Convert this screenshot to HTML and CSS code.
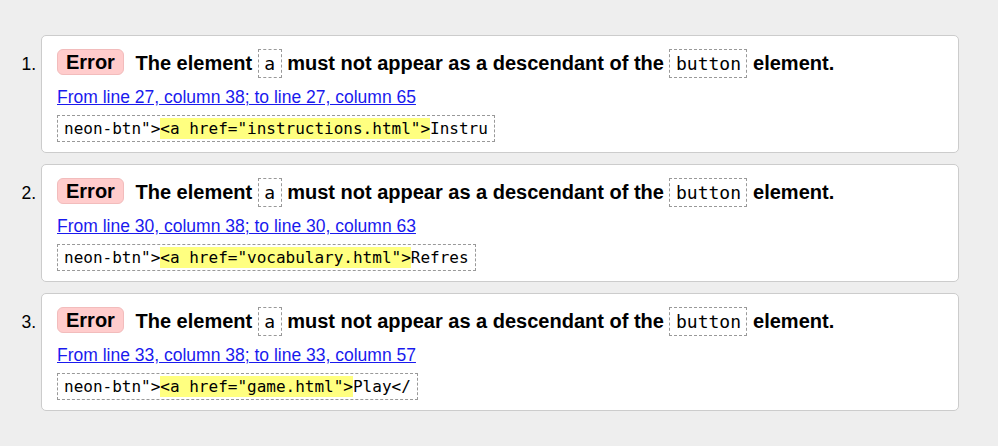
FILE: index.html
```html
<!DOCTYPE html>
<html lang="en">
<head>
<meta charset="utf-8">
<title>Validation errors</title>
<link rel="stylesheet" href="styles.css">
</head>
<body>
<ol class="messages">
  <li class="msg">
    <p class="title"><strong class="badge">Error</strong> <span class="text">The element <code>a</code> must not appear as a descendant of the <code>button</code> element.</span></p>
    <p class="loc"><a href="#l27">From line 27, column 38; to line 27, column 65</a></p>
    <p class="extract"><code class="snip">neon-btn"&gt;<b class="hl">&lt;a href="instructions.html"&gt;</b>Instru</code></p>
  </li>
  <li class="msg">
    <p class="title"><strong class="badge">Error</strong> <span class="text">The element <code>a</code> must not appear as a descendant of the <code>button</code> element.</span></p>
    <p class="loc"><a href="#l30">From line 30, column 38; to line 30, column 63</a></p>
    <p class="extract"><code class="snip">neon-btn"&gt;<b class="hl">&lt;a href="vocabulary.html"&gt;</b>Refres</code></p>
  </li>
  <li class="msg">
    <p class="title"><strong class="badge">Error</strong> <span class="text">The element <code>a</code> must not appear as a descendant of the <code>button</code> element.</span></p>
    <p class="loc"><a href="#l33">From line 33, column 38; to line 33, column 57</a></p>
    <p class="extract"><code class="snip">neon-btn"&gt;<b class="hl">&lt;a href="game.html"&gt;</b>Play&lt;/</code></p>
  </li>
</ol>
</body>
</html>
```
FILE: styles.css
```css
html, body {
  margin: 0;
  padding: 0;
  background: #eeeeee;
}
body {
  font-family: "Liberation Sans", Arial, sans-serif;
  color: #000;
}
.messages {
  margin: 35px 39px 0 41px;
  padding: 0;
  list-style: decimal outside;
  font-size: 17.5px;
}
.msg {
  box-sizing: border-box;
  background: #fff;
  border: 1px solid #cccccc;
  border-radius: 5px;
  padding: 12px 14px 10px 15px;
  margin: 0 0 11px 0;
  height: 118px;
}
.msg::marker {
  font-size: 17.5px;
}
.title {
  margin: 0;
  font-size: 20px;
  line-height: 30px;
  font-weight: bold;
}
.badge {
  display: inline-block;
  background: #ffcccc;
  border: 1px solid #f2bcbc;
  border-radius: 6px;
  padding: 0 8px;
  line-height: 24px;
  margin-right: 6px;
  vertical-align: 1px;
}
.title code {
  font-family: "DejaVu Sans Mono", "Liberation Mono", monospace;
  font-weight: normal;
  font-size: 18px;
  border: 1px dashed #999;
  padding: 3px 5.5px;
}
.loc {
  margin: 7px 0 0 0;
  line-height: 22px;
}
.loc a {
  color: #1a1aee;
  text-decoration: underline;
}
.extract {
  margin: 7px 0 0 0;
  line-height: 21px;
}
.snip {
  display: inline-block;
  font-family: "DejaVu Sans Mono", "Liberation Mono", monospace;
  font-size: 16px;
  line-height: 21px;
  border: 1px dashed #999;
  padding: 2px 6px;
  white-space: pre;
}
.hl {
  display: inline-block;
  font-weight: normal;
  background: #ffff80;
  line-height: 21px;
  vertical-align: top;
}
```
